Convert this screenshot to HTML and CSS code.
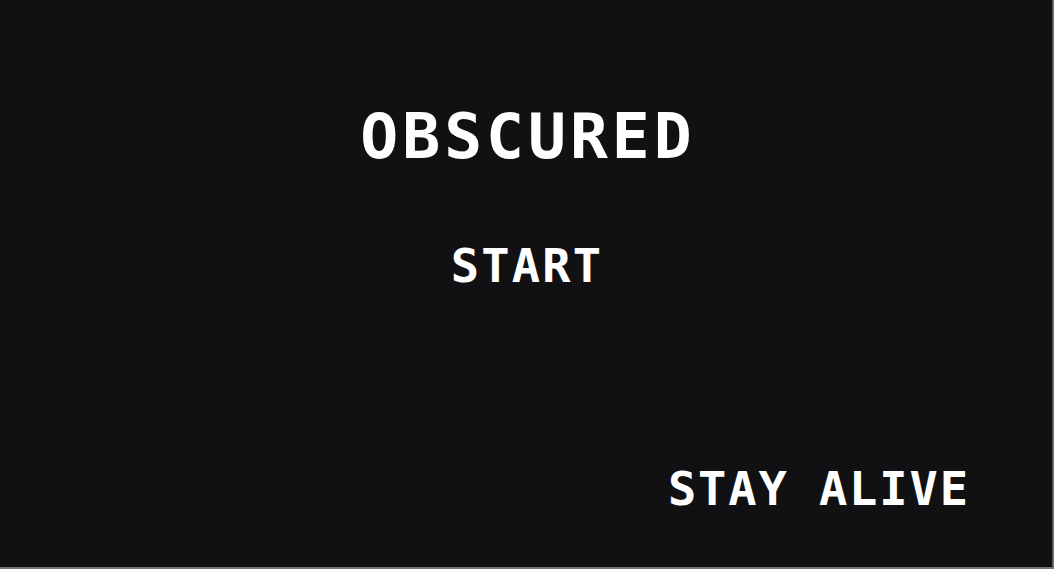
FILE: index.html
```html
<!DOCTYPE html>
<html>
<head>
<meta charset="utf-8">
<link rel="stylesheet" href="styles.css">
</head>
<body>
<div class="screen">
  <div class="menu">
    <h1 class="title">OBSCURED</h1>
    <div class="start">START</div>
  </div>
  <div class="footer">
    <div class="tagline">STAY ALIVE</div>
  </div>
</div>
</body>
</html>
```

FILE: styles.css
```css
html, body {
  margin: 0;
  padding: 0;
  background: #767676;
}
.screen {
  width: 1052px;
  height: 567px;
  background: #111113;
  border-right: 1px solid #555;
  display: flex;
  flex-direction: column;
  font-family: "DejaVu Sans Mono", "Liberation Mono", monospace;
  font-weight: bold;
  color: #ffffff;
}
.menu {
  flex: 1;
  display: flex;
  flex-direction: column;
  align-items: center;
  padding-top: 105px;
}
.title {
  margin: 0;
  font-size: 63px;
  line-height: 63px;
  letter-spacing: 4px;
  font-weight: bold;
  margin-right: -4px;
}
.start {
  margin-top: 74px;
  font-size: 47px;
  line-height: 47px;
  letter-spacing: 2.2px;
  margin-right: -2.2px;
}
.footer {
  display: flex;
  justify-content: flex-end;
  padding: 0 84px 55px 0;
}
.tagline {
  font-size: 47px;
  line-height: 47px;
  letter-spacing: 1.9px;
  margin-right: -1.9px;
}
```
